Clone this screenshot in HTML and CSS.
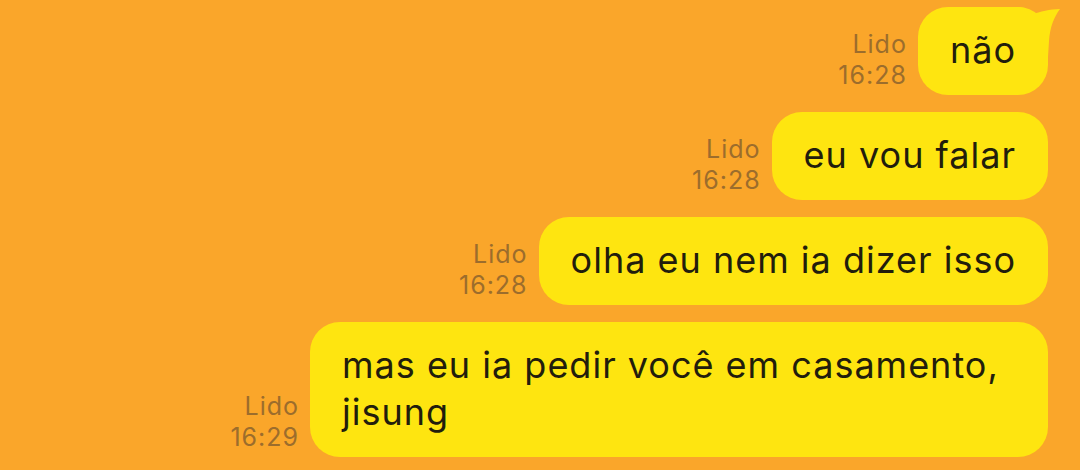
FILE: index.html
```html
<!DOCTYPE html>
<html lang="pt">
<head>
    <meta charset="UTF-8">
    <meta name="viewport" content="width=device-width, initial-scale=1.0">
    <title>Chat</title>
    <link rel="stylesheet" href="styles.css">
</head>
<body>
    <div class="chat">
        <div class="row">
            <div class="meta">Lido<br>16:28</div>
            <div class="bubble first">
                não
                <svg class="tail" width="44" height="50" viewBox="0 0 44 50">
                    <path d="M0,0 C8,0 12,4 14,7 C22,5 32,2 42,2 C36,10 32,20 31,34 L30,50 L0,50 Z" />
                </svg>
            </div>
        </div>
        <div class="row">
            <div class="meta">Lido<br>16:28</div>
            <div class="bubble">eu vou falar</div>
        </div>
        <div class="row">
            <div class="meta">Lido<br>16:28</div>
            <div class="bubble">olha eu nem ia dizer isso</div>
        </div>
        <div class="row">
            <div class="meta">Lido<br>16:29</div>
            <div class="bubble">mas eu ia pedir você em casamento, jisung</div>
        </div>
    </div>
</body>
</html>
```

FILE: styles.css
```css
body {
    margin: 0;
    background-color: #faa62a;
    font-family: Inter, "Noto Sans", sans-serif;
    overflow: hidden;
}

.chat {
    display: flex;
    flex-direction: column;
    align-items: flex-end;
    gap: 17px;
    padding: 7px 32px;
}

.row {
    display: flex;
    align-items: flex-end;
    gap: 11px;
}

.meta {
    text-align: right;
    font-size: 25px;
    line-height: 31px;
    letter-spacing: 1px;
    color: #9c6d2c;
    padding-bottom: 4px;
    white-space: nowrap;
}

.bubble {
    position: relative;
    max-width: 738px;
    box-sizing: border-box;
    padding: 20px 32px 21px;
    background-color: #fee510;
    color: #221d0c;
    border-radius: 30px;
    font-size: 36px;
    line-height: 47px;
    letter-spacing: 1px;
}

.tail {
    position: absolute;
    top: 0;
    right: -14px;
    fill: #fee510;
}
```
